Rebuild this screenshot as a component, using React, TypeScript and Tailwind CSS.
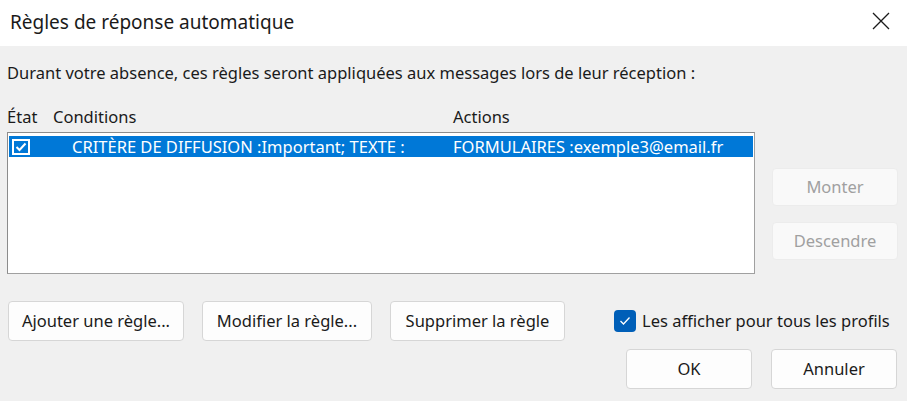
import React from 'react';

const font = { fontFamily: '"Noto Sans", "Open Sans", sans-serif' };

function Btn({ label, className = '' }: { label: string; className?: string }) {
  return (
    <button
      className={`h-[40px] rounded-[4px] border border-[#d6d6d6] bg-[#fdfdfd] text-[16.5px] text-[#1a1a1a] ${className}`}
    >
      {label}
    </button>
  );
}

export default function App() {
  return (
    <div className="w-[907px] h-[401px] bg-[#f0f0f0] flex flex-col overflow-hidden" style={font}>
      {/* barre de titre */}
      <div className="h-[46px] bg-white flex items-center justify-between pl-[10px] pr-[17px]">
        <span className="text-[19px] text-[#1a1a1a] -mt-[2px]">Règles de réponse automatique</span>
        <svg width="18" height="18" viewBox="0 0 18 18" className="-mt-[4px]">
          <path d="M1 1 L17 17 M17 1 L1 17" stroke="#1a1a1a" strokeWidth="1.3" />
        </svg>
      </div>

      <div className="flex flex-col px-[7px] text-[16.5px] text-[#1a1a1a]">
        <p className="mt-[16px] leading-[22px] whitespace-nowrap">
          Durant votre absence, ces règles seront appliquées aux messages lors de leur réception :
        </p>

        <div className="flex">
          <div className="flex flex-col w-[748px]">
            <div className="flex mt-[22px] leading-[22px]">
              <span className="w-[46px]">État</span>
              <span className="w-[400px]">Conditions</span>
              <span>Actions</span>
            </div>
            <div className="mt-[4px] h-[142px] bg-white border border-[#a0a0a0] border-t-[#8c8c8c] border-l-[#8c8c8c] pt-[3px] px-[1px]">
              <div className="h-[21px] bg-[#0078d7] flex items-center text-white leading-[21px]">
                <span className="w-[18px] h-[16px] ml-[3px] border-2 border-white flex items-center justify-center">
                  <svg width="12" height="10" viewBox="0 0 12 10">
                    <path d="M1.5 5 L4.5 8 L10.5 1.5" stroke="white" strokeWidth="2" fill="none" />
                  </svg>
                </span>
                <span className="ml-[42px] w-[381px] whitespace-nowrap">CRITÈRE DE DIFFUSION :Important; TEXTE :</span>
                <span className="whitespace-nowrap">FORMULAIRES :exemple3@email.fr</span>
              </div>
            </div>
          </div>

          <div className="flex flex-col ml-[17px] mt-[84px] gap-[16px]">
            <button className="w-[126px] h-[38px] rounded-[4px] border border-[#ececec] bg-[#f9f9f9] text-[16.5px] text-[#a0a0a0]">
              Monter
            </button>
            <button className="w-[126px] h-[38px] rounded-[4px] border border-[#ececec] bg-[#f9f9f9] text-[16.5px] text-[#a0a0a0]">
              Descendre
            </button>
          </div>
        </div>

        <div className="flex items-center mt-[27px]">
          <Btn label="Ajouter une règle..." className="ml-[1px] w-[176px]" />
          <Btn label="Modifier la règle..." className="ml-[18px] w-[170px] border-[#0067c0]" />
          <Btn label="Supprimer la règle" className="ml-[18px] w-[175px]" />
          <span className="ml-[49px] w-[22px] h-[22px] rounded-[4px] bg-[#005fb8] flex items-center justify-center">
            <svg width="12" height="10" viewBox="0 0 12 10">
              <path d="M1.5 5 L4.5 8 L10.5 1.5" stroke="white" strokeWidth="1.3" fill="none" />
            </svg>
          </span>
          <span className="ml-[6px] whitespace-nowrap">Les afficher pour tous les profils</span>
        </div>

        <div className="flex justify-end mt-[8px] pr-[3px] gap-[19px]">
          <Btn label="OK" className="w-[126px]" />
          <Btn label="Annuler" className="w-[126px]" />
        </div>
      </div>
    </div>
  );
}
